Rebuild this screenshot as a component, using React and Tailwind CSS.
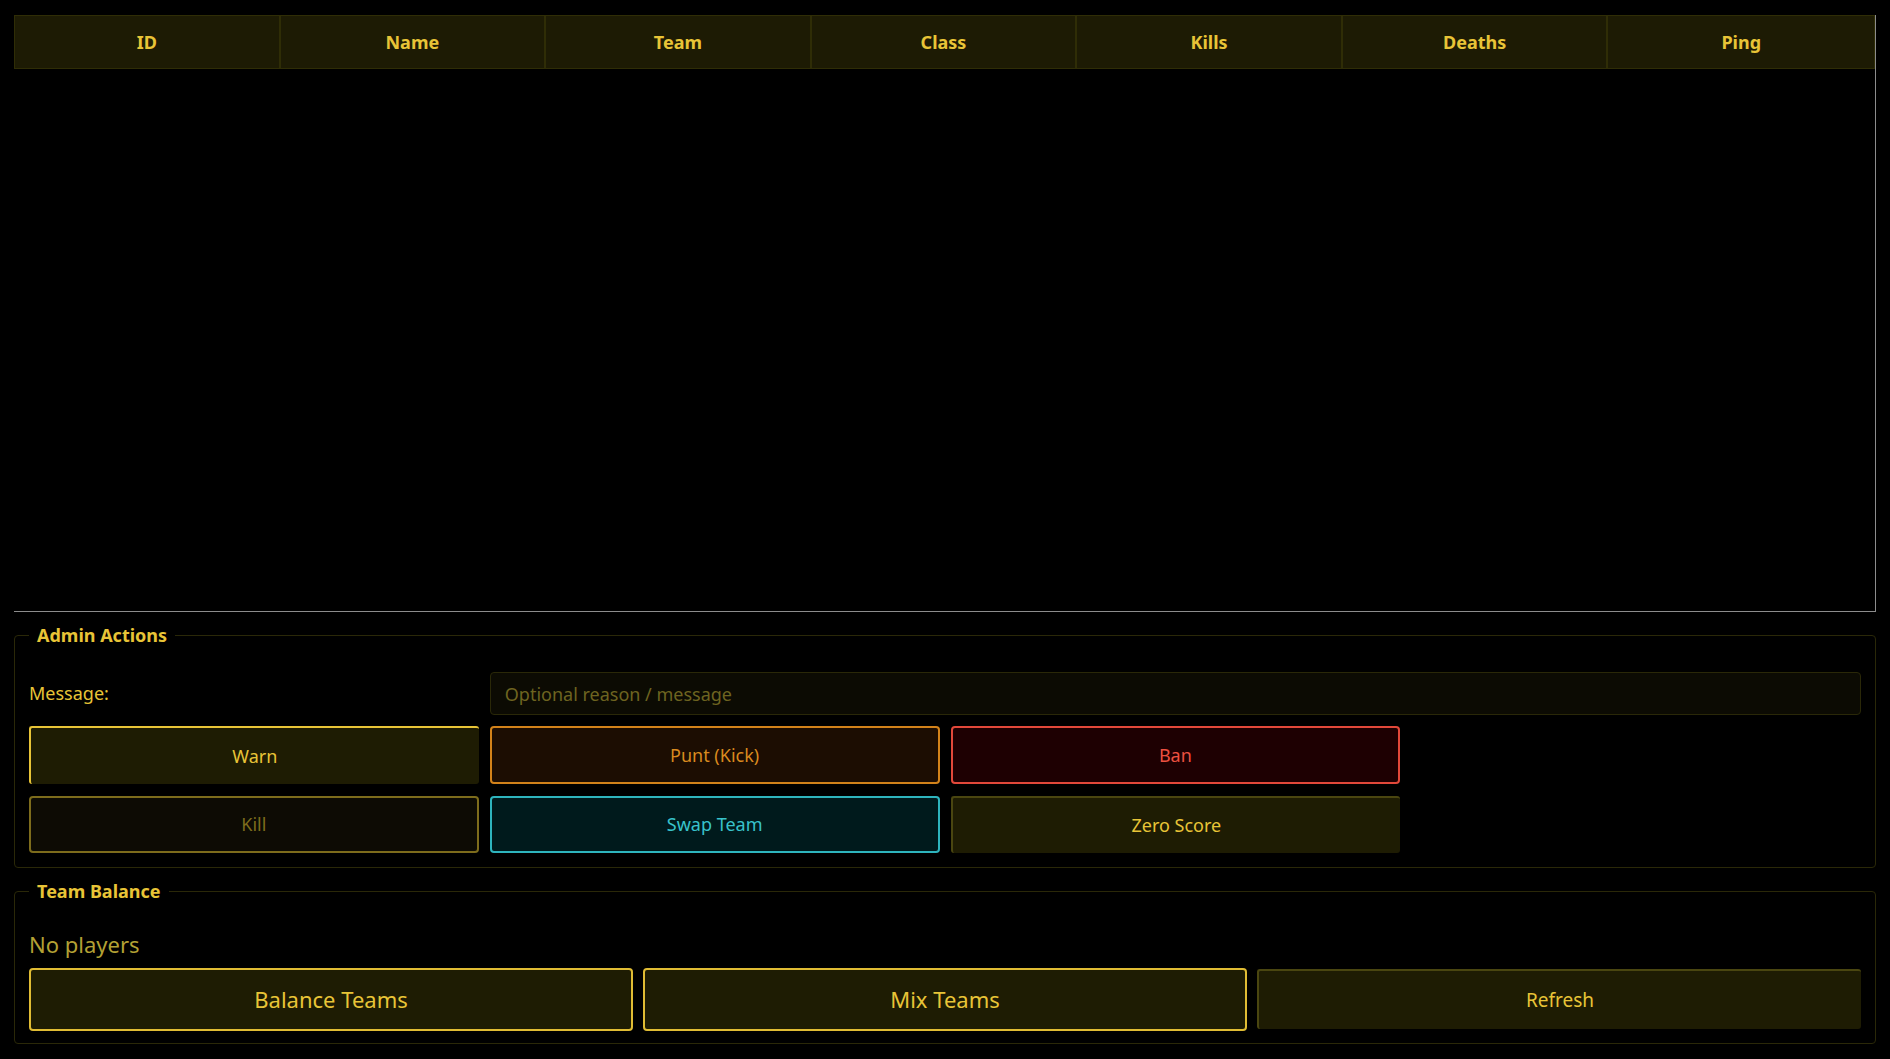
import React from "react";

const columns = ["ID", "Name", "Team", "Class", "Kills", "Deaths", "Ping"];

const font = { fontFamily: "'Noto Sans', 'Open Sans', Arial, sans-serif" };

const App = () => {
  return (
    <div className="min-h-screen bg-black px-[14px] pt-[15px] pb-[14px]" style={font}>
      {/* player list */}
      <div className="h-[597px] border-r border-b border-[#8c8c8c]">
        <div className="grid grid-cols-7 h-[54px] bg-[#1d1b04] border border-[#2f2d06]">
          {columns.map((col, i) => (
            <div
              key={col}
              className={`flex items-center justify-center text-[18px] font-bold text-[#e8c437] ${i < columns.length - 1 ? "border-r-2 border-[#2f2d06]" : ""}`}
            >
              {col}
            </div>
          ))}
        </div>
      </div>

      {/* admin actions */}
      <fieldset className="mt-[11px] border border-[#2a2808] rounded-[4px] px-[14px] pt-[25px] pb-[14px]">
        <legend className="px-[8px] text-[18px] leading-[24px] font-bold text-[#e8c437]">Admin Actions</legend>
        <div className="grid grid-cols-4 gap-x-[11px] gap-y-[11px]">
          <div className="flex items-center text-[18px] text-[#e8c437]">Message:</div>
          <input
            className="col-span-3 h-[43px] rounded-[4px] border border-[#2a2808] bg-[#0c0b03] px-[14px] text-[18px] text-[#e8c437] placeholder:text-[#6e6420] outline-none"
            placeholder="Optional reason / message"
          />

          <button className="h-[58px] rounded-[3px] border-t-2 border-l-2 border-[#e8c437] bg-[#1e1c03] text-[18px] text-[#e8c437] shadow-[3px_3px_4px_rgba(0,0,0,0.9)]">
            Warn
          </button>
          <button className="h-[58px] rounded-[4px] border-2 border-[#d2821a] bg-[#1c0d02] text-[18px] text-[#d98a1f]">
            Punt (Kick)
          </button>
          <button className="h-[58px] rounded-[4px] border-2 border-[#e2483a] bg-[#1e0002] text-[18px] text-[#ec5040]">
            Ban
          </button>
          <div />

          <button className="h-[57px] mt-[1px] rounded-[4px] border-2 border-[#7d6c1c] bg-[#0d0b04] text-[18px] text-[#7d6d1c]">
            Kill
          </button>
          <button className="h-[57px] mt-[1px] rounded-[4px] border-2 border-[#2eb4bd] bg-[#001a1c] text-[18px] text-[#38c2cb]">
            Swap Team
          </button>
          <button className="h-[57px] mt-[1px] rounded-[3px] border-t-2 border-l-2 border-[#4a4610] bg-[#1e1c03] text-[18px] text-[#e8c437] shadow-[3px_3px_4px_rgba(0,0,0,0.9)]">
            Zero Score
          </button>
          <div />
        </div>
      </fieldset>

      {/* team balance */}
      <fieldset className="mt-[11px] border border-[#2a2808] rounded-[4px] px-[14px] pt-[26px] pb-[12px]">
        <legend className="px-[8px] text-[18px] leading-[24px] font-bold text-[#e8c437]">Team Balance</legend>
        <div className="text-[22px] leading-[30px] text-[#b3a134]">No players</div>
        <div className="mt-[9px] grid grid-cols-3 gap-[10px]">
          <button className="h-[63px] rounded-[4px] border-2 border-[#e0bc34] bg-[#1e1c03] text-[22px] text-[#e8c437]">
            Balance Teams
          </button>
          <button className="h-[63px] rounded-[4px] border-2 border-[#e0bc34] bg-[#1e1c03] text-[22px] text-[#e8c437]">
            Mix Teams
          </button>
          <button className="h-[60px] mt-[1px] rounded-[3px] border-t-2 border-l-2 border-[#4a4610] bg-[#1e1c03] text-[19px] text-[#e8c437] shadow-[3px_3px_4px_rgba(0,0,0,0.9)]">
            Refresh
          </button>
        </div>
      </fieldset>
    </div>
  );
};

export default App;
